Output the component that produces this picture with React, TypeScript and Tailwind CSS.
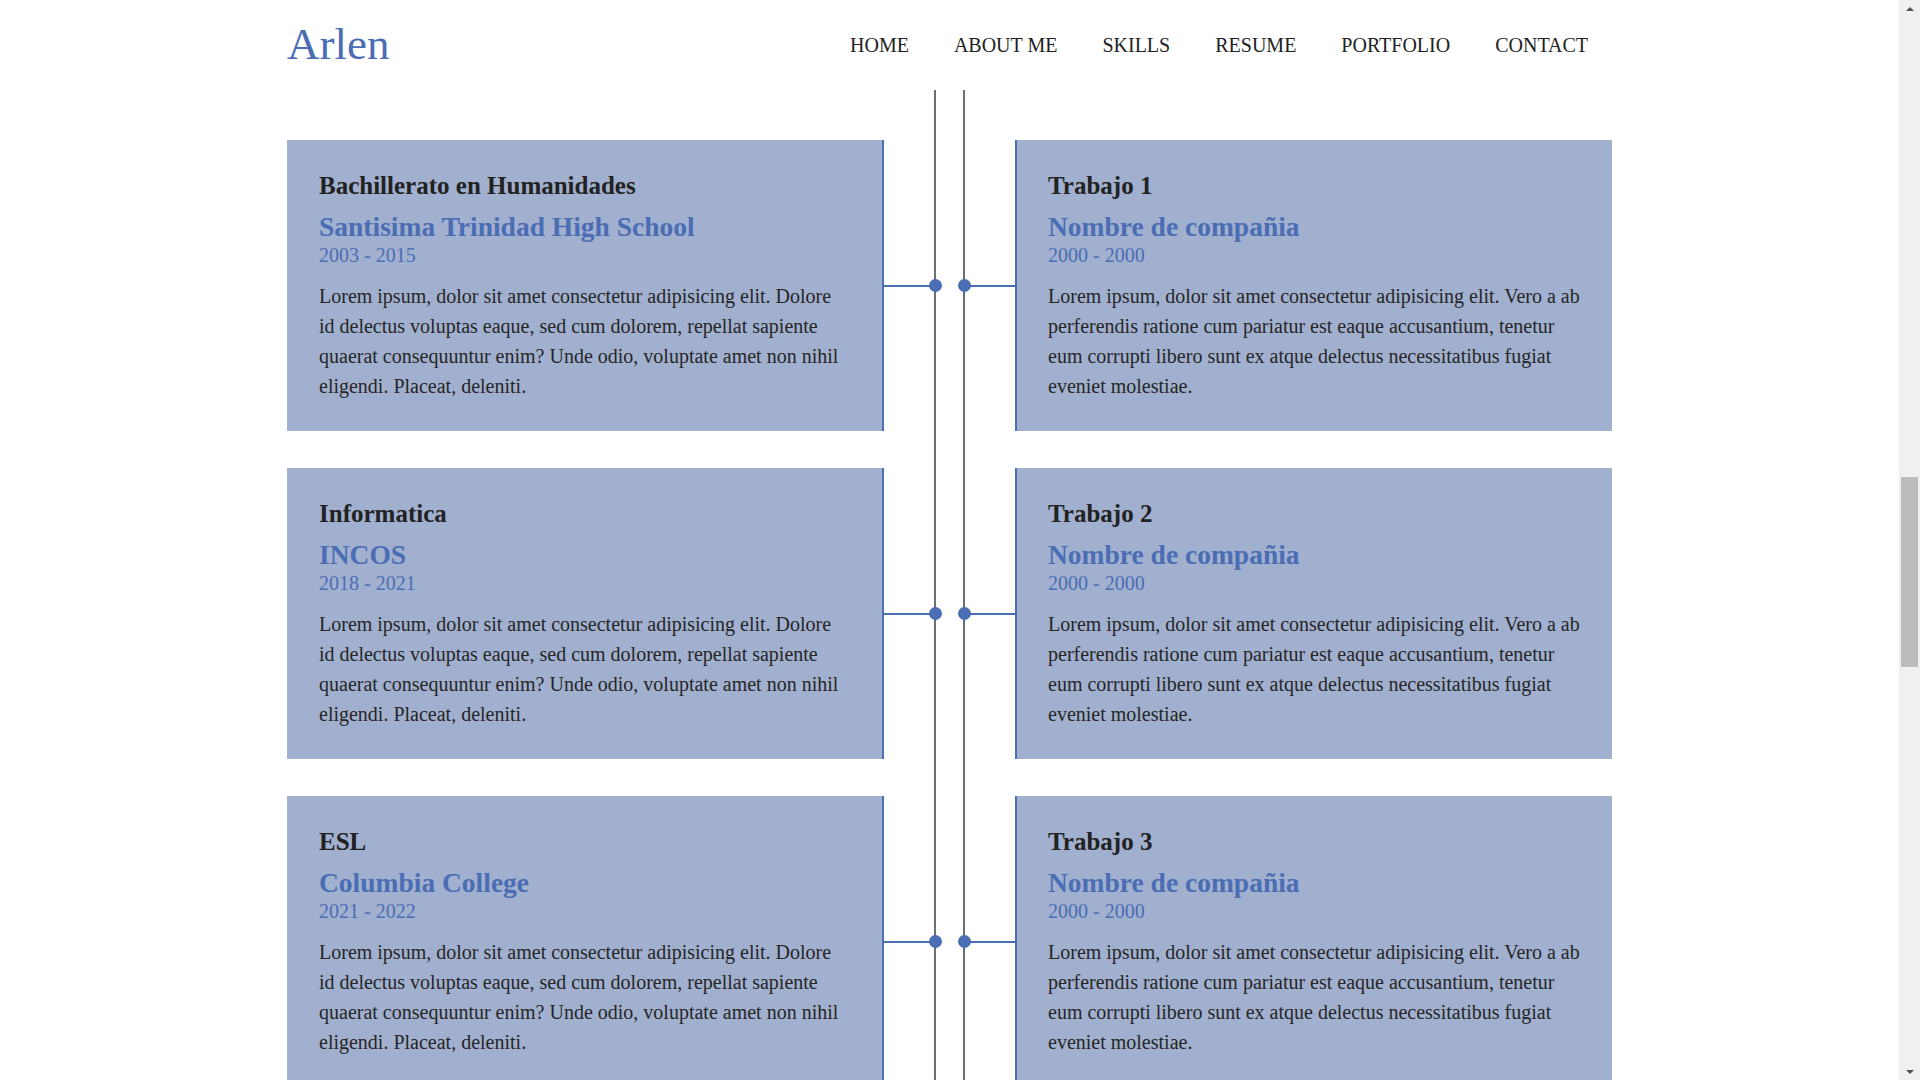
import React from "react";

const LEFT_BODY =
  "Lorem ipsum, dolor sit amet consectetur adipisicing elit. Dolore id delectus voluptas eaque, sed cum dolorem, repellat sapiente quaerat consequuntur enim? Unde odio, voluptate amet non nihil eligendi. Placeat, deleniti.";
const RIGHT_BODY =
  "Lorem ipsum, dolor sit amet consectetur adipisicing elit. Vero a ab perferendis ratione cum pariatur est eaque accusantium, tenetur eum corrupti libero sunt ex atque delectus necessitatibus fugiat eveniet molestiae.";

const rows = [
  {
    left: { title: "Bachillerato en Humanidades", place: "Santisima Trinidad High School", dates: "2003 - 2015" },
    right: { title: "Trabajo 1", place: "Nombre de compañia", dates: "2000 - 2000" },
  },
  {
    left: { title: "Informatica", place: "INCOS", dates: "2018 - 2021" },
    right: { title: "Trabajo 2", place: "Nombre de compañia", dates: "2000 - 2000" },
  },
  {
    left: { title: "ESL", place: "Columbia College", dates: "2021 - 2022" },
    right: { title: "Trabajo 3", place: "Nombre de compañia", dates: "2000 - 2000" },
  },
];

type Entry = { title: string; place: string; dates: string };

function CardBody({ e, body }: { e: Entry; body: string }) {
  return (
    <>
      <h3 className="text-[25px] font-bold leading-[30px] text-[#222]">{e.title}</h3>
      <h4 className="mt-[10px] text-[27.5px] font-bold leading-[32px] text-[#4a6db4]">{e.place}</h4>
      <p className="text-[20px] leading-[24px] text-[#4a6db4]">{e.dates}</p>
      <p className="mt-[13.5px] text-[20px] leading-[30px] text-[#262626]">{body}</p>
    </>
  );
}

function Middle({ last, spacer }: { last?: boolean; spacer?: boolean }) {
  const pad = last || spacer ? "" : "pb-[37px]";
  return (
    <div className="flex w-[131px] shrink-0 self-stretch">
      <div className={`flex w-[50px] items-center ${pad}`}>
        {!spacer && <div className="h-[2px] w-full bg-[#4a6db4]" />}
      </div>
      <div className={`flex w-[2px] items-center justify-center bg-[#6c7076] ${pad}`}>
        {!spacer && <div className="h-[13px] w-[13px] shrink-0 rounded-full bg-[#4a6db4]" />}
      </div>
      <div className="w-[27px]" />
      <div className={`flex w-[2px] items-center justify-center bg-[#6c7076] ${pad}`}>
        {!spacer && <div className="h-[13px] w-[13px] shrink-0 rounded-full bg-[#4a6db4]" />}
      </div>
      <div className={`flex w-[50px] items-center ${pad}`}>
        {!spacer && <div className="h-[2px] w-full bg-[#4a6db4]" />}
      </div>
    </div>
  );
}

export default function App() {
  return (
    <div
      className="flex h-[1080px] w-full overflow-hidden bg-white"
      style={{ fontFamily: '"Liberation Serif", "Times New Roman", serif' }}
    >
      <div className="h-[1080px] flex-1 overflow-hidden">
        <header className="mx-auto flex h-[90px] w-[1325px] items-center justify-between">
          <div className="text-[45px] text-[#4a6db4]">Arlen</div>
          <nav className="mr-[24px] flex gap-[45px] text-[20px] text-[#222]">
            {["HOME", "ABOUT ME", "SKILLS", "RESUME", "PORTFOLIO", "CONTACT"].map((n) => (
              <a key={n}>{n}</a>
            ))}
          </nav>
        </header>
        <section className="mx-auto w-[1325px]">
          <div className="flex h-[50px]">
            <div className="w-[597px] shrink-0" />
            <Middle spacer />
            <div className="w-[597px] shrink-0" />
          </div>
          {rows.map((r, i) => {
            const last = i === rows.length - 1;
            return (
              <div key={i} className="flex">
                <div className={`w-[597px] shrink-0 ${last ? "" : "pb-[37px]"}`}>
                  <div className="border-r-2 border-[#4a6db4] bg-[#a1b0cf] pt-[31px] pb-[30.6px] pl-[32px] pr-[33px]">
                    <CardBody e={r.left} body={LEFT_BODY} />
                  </div>
                </div>
                <Middle last={last} />
                <div className={`w-[597px] shrink-0 ${last ? "" : "pb-[37px]"}`}>
                  <div className="border-l-2 border-[#4a6db4] bg-[#a1b0cf] pt-[31px] pb-[30.6px] pl-[31px] pr-[24px]">
                    <CardBody e={r.right} body={RIGHT_BODY} />
                  </div>
                </div>
              </div>
            );
          })}
        </section>
      </div>
      <div className="flex h-[1080px] w-[21px] shrink-0 flex-col bg-[#f0f0f0]">
        <div className="flex h-[17px] items-center justify-center">
          <div className="h-0 w-0 border-x-[4px] border-b-[4px] border-x-transparent border-b-[#505050]" />
        </div>
        <div className="flex flex-1 flex-col px-[2px]">
          <div className="h-[460px]" />
          <div className="h-[190px] bg-[#bcbcbc]" />
        </div>
        <div className="flex h-[17px] items-center justify-center">
          <div className="h-0 w-0 border-x-[4px] border-t-[4px] border-x-transparent border-t-[#505050]" />
        </div>
      </div>
    </div>
  );
}
